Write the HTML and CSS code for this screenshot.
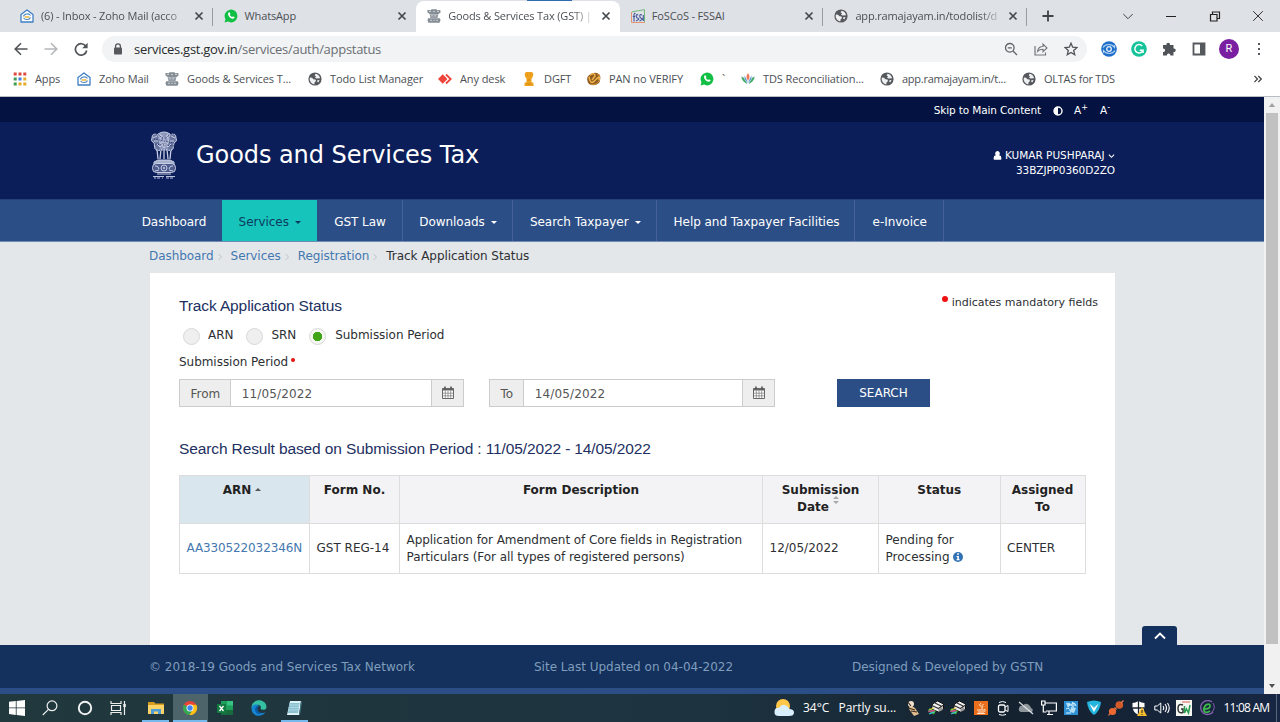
FILE: index.html
```html
<!DOCTYPE html>
<html lang="en">
<head>
<meta charset="utf-8">
<title>Goods &amp; Services Tax (GST)</title>
<link rel="stylesheet" href="styles.css">
</head>
<body>
<svg class="defs" width="0" height="0" aria-hidden="true">
  <symbol id="close" viewBox="0 0 12 12"><path d="M2.500 2.500l7 7M9.500 2.500l-7 7" stroke="#45494d" stroke-width="1.700" fill="none"/></symbol>
  <symbol id="zoho" viewBox="0 0 14 14"><path d="M1 5.500L7 1l6 4.500V13H1z" fill="#fff" stroke="#3f7fc4" stroke-width="1.300" stroke-linejoin="round"/><path d="M3.500 7.500C4 4.500 9 4 10.500 6.500M10.500 8.500C9.500 11 5 11 3.500 9" fill="none" stroke="#4b86c6" stroke-width="1.100"/><path d="M4.500 8h5" stroke="#efb73e" stroke-width="1.500"/></symbol>
  <symbol id="wa" viewBox="0 0 14 14"><path d="M.5 13.500l1-3.300A6.400 6.400 0 1 1 4 12.600z" fill="#12bf45"/><path d="M4.600 3.600c.8-.7 1.200-.1 1.700 1.100.2.500-.6.800-.4 1.200.5 1 1.200 1.700 2.200 2.100.4.200.8-.8 1.200-.6 1.400.7 1.600.9 1 1.700-.9 1.200-2.700.8-4.200-.4C4.200 7.200 3.300 5 4.600 3.600z" fill="#fff"/></symbol>
  <symbol id="globe" viewBox="0 0 14 14"><circle cx="7" cy="7" r="6.600" fill="#55585d"/><path d="M2 5.500l2 .2 1.500 1.600 2 .3.500 1.500-1.500 1.300-.2 2C3.500 12 1.700 9.500 1.600 7zM7.500 1.700L6.600 3.500l1.500.8L7 5.600l1.500 1 3.600-.3C11.800 4 10 2 7.500 1.700zM9.300 8.300l2.200-.3-1 2.200-1.200-.3z" fill="#eef0f2"/></symbol>
  <symbol id="pillar" viewBox="0 0 14 14"><path d="M4.500.3h5l.6.900 3.200-.2.300 2.600-2 1.500H2.600L.6 3.600.3 1l3.600.2z" fill="#858c94"/><path d="M2.600 5.300h8.800l-.8 3.700H3.400z" fill="#959ca4"/><path d="M1 9.200h12l.4 2-.8 2.500H1.400L.6 11.200z" fill="#848c95"/><path d="M2 2.600h2M6 2.600h2M10 2.600h2M4.200 6.800h1.500M7.500 6.800H9M3 11.300h2M6.200 11.300h1.600M9 11.300h2" stroke="#dfe2e6" stroke-width=".8"/></symbol>
  <symbol id="calendar" viewBox="0 0 12 13"><path d="M.5 2.500h11v10H.5z" fill="#fff" stroke="#666" /><path d="M.5 2.500h11v2H.5z" fill="#666"/><path d="M3 .5v3M9 .5v3" stroke="#555" stroke-width="1.600"/><path d="M3.300 4.500v8M6 4.500v8M8.700 4.500v8M.5 7.200h11M.5 9.800h11" stroke="#777" stroke-width=".7"/></symbol>
  <symbol id="printer" viewBox="0 0 16 16"><path d="M4.500 4l5-3 6 3v5l-5 3-7-3z" fill="#f1f1f1" stroke="#111" stroke-width="1"/><path d="M4 5.500l6.500 3 5-3.500M7 3l6 3" fill="none" stroke="#333" stroke-width="1.200"/><path d="M10.500 9v3l4-2V7z" fill="#999"/><path d="M1 8.500l7 2-2 4-6-3z" fill="#49b63d"/><path d="M.5 11.500l6-1" stroke="#d33b8c" stroke-width="1.600"/><path d="M1 14l5-2" stroke="#3ac5df" stroke-width="1.200"/><path d="M1.500 9.500l5-1.500" stroke="#e8d544" stroke-width="1"/></symbol>
</svg>

<header class="tabstrip">
  <div class="tabs">
    <div class="tab ruled"><svg class="fav"><use href="#zoho"/></svg><span class="tab-title fade">(6) - Inbox - Zoho Mail (acco</span><svg class="x"><use href="#close"/></svg></div>
    <div class="tab"><svg class="fav"><use href="#wa"/></svg><span class="tab-title">WhatsApp</span><svg class="x"><use href="#close"/></svg></div>
    <div class="tab active"><svg class="fav"><use href="#pillar"/></svg><span class="tab-title fade">Goods &amp; Services Tax (GST) |</span><svg class="x"><use href="#close"/></svg></div>
    <div class="tab ruled"><svg class="fav" viewBox="0 0 14 14"><path d="M.5 3v10.500H14" fill="none" stroke="#e59472"/><path d="M1 2.800L13.500.7V13" fill="none" stroke="#74b87b"/><path d="M3 12.500V6Q3 4 4.500 4.500M1.800 7.500h2.400M7.200 6Q5 5 5.200 7t2 2.500T5 12M11 6Q8.700 5 8.700 7t2 2.500-2.200 2.500M12.300 6v6" fill="none" stroke="#43559a" stroke-width="1.100"/></svg><span class="tab-title">FoSCoS - FSSAI</span><svg class="x"><use href="#close"/></svg></div>
    <div class="tab ruled"><svg class="fav"><use href="#globe"/></svg><span class="tab-title fade">app.ramajayam.in/todolist/d</span><svg class="x"><use href="#close"/></svg></div>
  </div>
  <svg class="plus" viewBox="0 0 12 12"><path d="M6 .5v11M.5 6h11" stroke="#404347" stroke-width="1.800"/></svg>
  <div class="window-controls">
    <svg viewBox="0 0 12 12"><path d="M1.300 4L6 8.700 10.700 4" fill="none" stroke="#444"/></svg>
    <svg viewBox="0 0 12 12"><path d="M1 6.500h10" stroke="#222"/></svg>
    <svg viewBox="0 0 12 12"><path d="M1.500 4.500h6.500v6.500H1.500zM3.500 4V2h7v6.500H8.500" fill="none" stroke="#222" stroke-width="1.200"/></svg>
    <svg viewBox="0 0 12 12"><path d="M1.200 1.200l9.600 9.600M10.800 1.200L1.200 10.800" stroke="#333"/></svg>
  </div>
</header>

<div class="toolbar">
  <div class="history">
    <svg viewBox="0 0 14 14"><path d="M13.500 7H1.500M7 1.200L1.200 7 7 12.800" fill="none" stroke="#505357" stroke-width="1.600"/></svg>
    <svg viewBox="0 0 14 14"><path d="M.5 7h12M7 1.200L12.800 7 7 12.800" fill="none" stroke="#b4b7ba" stroke-width="1.600"/></svg>
    <svg viewBox="0 0 14 14"><path d="M12 4.500A5.700 5.700 0 1 0 12.700 8.500" fill="none" stroke="#505357" stroke-width="1.700"/><path d="M13.600 .8V6.200H8.200z" fill="#505357"/></svg>
  </div>
  <div class="omnibox">
    <svg class="lock" viewBox="0 0 10 12"><path d="M2.600 5V3.300a2.400 2.400 0 0 1 4.800 0V5" fill="none" stroke="#55585c" stroke-width="1.300"/><rect x="1" y="4.500" width="8" height="7" rx="1" fill="#55585c"/></svg>
    <span class="url">services.gst.gov.in<i>/services/auth/appstatus</i></span>
    <div class="omni-actions">
      <svg viewBox="0 0 14 14"><circle cx="5.800" cy="5.800" r="4.300" fill="none" stroke="#606367" stroke-width="1.300"/><path d="M9 9l4 4M3.800 5.800h4" stroke="#606367" stroke-width="1.300"/></svg>
      <svg viewBox="0 0 14 14"><path d="M1 4v9h10.500v-2.500" fill="none" stroke="#74777a" stroke-width="1.200"/><path d="M3.500 9.500C4 6 6 4.500 9 4.500V2l4 4-4 3.700V7.200Q5.500 7.200 3.500 9.500z" fill="none" stroke="#74777a" stroke-width="1.100"/></svg>
      <svg viewBox="0 0 14 14"><path d="M7 1.200l1.700 4 4.300.4-3.300 2.800 1 4.300L7 10.400l-3.700 2.300 1-4.300L1 5.600l4.300-.4z" fill="none" stroke="#505357" stroke-width="1.300"/></svg>
    </div>
  </div>
  <div class="extensions">
    <svg viewBox="0 0 16 16"><circle cx="8" cy="8" r="7.800" fill="#1f6fc9"/><path d="M2 6.500C4.500 2.500 11 2.500 13.500 6.500l.3-2.500M14 9.500C11.500 13.500 5 13.500 2.500 9.500l-.3 2.500" fill="none" stroke="#b5d4f5" stroke-width="1.100"/><circle cx="8" cy="8" r="2.300" fill="none" stroke="#e8f2fd" stroke-width="1.300"/></svg>
    <svg viewBox="0 0 16 16"><circle cx="8" cy="8" r="7.800" fill="#15c39a"/><path d="M11.200 5A4.200 4.200 0 1 0 12 9.300H8.700M12 9v3" fill="none" stroke="#fff" stroke-width="1.500"/></svg>
    <svg viewBox="0 0 16 16"><path d="M2 4h3.500c-.7-3 4-3 3.500 0h3.500v3.500c3-.7 3 4 0 3.500v3.500H9.300c.5-2.800-3.800-2.800-3.300 0H2V11c2.700.5 2.700-3.800 0-3.500z" fill="#505458"/></svg>
    <svg viewBox="0 0 16 16"><path d="M2.500 2.500h11v11h-11z" fill="#fff" stroke="#55585c" stroke-width="1.800"/><path d="M9 2h5v12H9z" fill="#55585c"/></svg>
    <span class="avatar">R</span>
    <svg viewBox="0 0 16 16"><path d="M7 2h2v2H7zM7 7h2v2H7zM7 12h2v2H7z" fill="#55585c"/></svg>
  </div>
</div>

<nav class="bookmarks">
  <span><svg viewBox="0 0 14 14"><path d="M.7.500h3v3h-3zM5.500.500h3v3h-3zM10.300.500h3v3h-3z" fill="#dc4a41"/><path d="M.7 5.500h3v3h-3z" fill="#3d9a55"/><path d="M5.500 5.500h3v3h-3z" fill="#3e7de0"/><path d="M10.300 5.500h3v3h-3z" fill="#e5aa26"/><path d="M.7 10.500h3v3h-3z" fill="#3d9a55"/><path d="M5.500 10.500h3v3h-3zM10.300 10.500h3v3h-3z" fill="#e5aa26"/></svg>Apps</span>
  <span><svg><use href="#zoho"/></svg>Zoho Mail</span>
  <span><svg><use href="#pillar"/></svg>Goods &amp; Services T...</span>
  <span><svg><use href="#globe"/></svg>Todo List Manager</span>
  <span><svg viewBox="0 0 14 14"><path d="M0 7l4.700-4.700L9.400 7l-4.700 4.700z" fill="#ef443b"/><path d="M8 2.500L12.700 7l-4.700 4.500" fill="none" stroke="#ef443b" stroke-width="1.800"/></svg>Any desk</span>
  <span><svg viewBox="0 0 14 14"><path d="M4 0h6l1.500 2-1 3.500-1 1v3.500l2 1V14h-9v-3l2-1V6.500l-1-1L2.500 2z" fill="#efa21e"/><path d="M5 3h1M8 3h1M5.500 8h3M4.500 12h5" stroke="#cc8414" stroke-width=".8"/></svg>DGFT</span>
  <span><svg viewBox="0 0 14 14"><path d="M1 4l3-2q5-3 9 1 1 5-1 8-5 4-10 1Q-1 8 1 4z" fill="#8a5a20"/><path d="M2 4.500q1 8 5 5l4-4q2-2 1 3M3 3q5-3 5 1L5 8" fill="none" stroke="#efb24c" stroke-width="1.600"/><path d="M3.500 12q5 2 8.500-3M10 2l3 2" fill="none" stroke="#d99335"/></svg>PAN no VERIFY</span>
  <span><svg><use href="#wa"/></svg>`</span>
  <span><svg viewBox="0 0 14 14"><path d="M6.500 12Q1 10 .3 4.500 5 6 6.500 12z" fill="#41ab68"/><path d="M7.500 12Q13 10 13.700 4.500 9 6 7.500 12z" fill="#41ab68"/><path d="M7 12Q2.500 7 3 3.500 6.500 6 7 12zM7 12q4.500-5 4-8.500Q7.500 6 7 12z" fill="#4f8fce" stroke="#fff" stroke-width=".5"/><path d="M7 9Q3.500 4.500 7 1q3.500 3.500 0 8z" fill="#ec7653" stroke="#fff" stroke-width=".5"/></svg>TDS Reconciliation...</span>
  <span><svg><use href="#globe"/></svg><em>app.ramajayam.in/t...</em></span>
  <span><svg><use href="#globe"/></svg><em>OLTAS for TDS</em></span>
  <svg class="more" viewBox="0 0 8 8"><path d="M.5 1l3 3-3 3M4.300 1l3 3-3 3" fill="none" stroke="#444" stroke-width="1.200"/></svg>
</nav>

<div class="viewport">
  <main class="page">
    <div class="skip"><div class="wrap"><span class="skip-text">Skip to Main Content</span>
      <svg viewBox="0 0 10 10"><circle cx="5" cy="5" r="4" fill="none" stroke="#fff" stroke-width="1.400"/><path d="M5 1a4 4 0 0 0 0 8z" fill="#fff"/></svg>
      <span class="size">A<sup>+</sup></span><span class="size">A<sup>-</sup></span></div></div>
    <div class="brand"><div class="wrap">
      <svg class="emblem" viewBox="0 0 28 48"><g fill="none" stroke="#c8cde3" stroke-width="1">
        <path d="M8 3q6-4 12 0l-1 4q4 5 1 12H8Q5 12 9 7z" fill="#8d97bd"/>
        <path d="M8 4Q2 1 2 7q-2 3 2 5l1 6q2 3 5 1M20 4q6-3 6 3 2 3-2 5l-1 6q-2 3-5 1" fill="#68759f"/>
        <path d="M10 3q2 3 0 5t1 5q3 2 6 0t1-5-0-5M11 5h2m3 0h2M14 6v4M11 11h6M3 7l4-2M25 7l-4-2M4 10l4 0M24 10l-4 0M7 13l3 3 2-2 2 3 2-3 2 2 3-3"/>
        <path d="M7 18l1 10M11 18l-1 10M14 18v10M17 18l1 10M21 18l-1 10" stroke-width="1.300"/>
        <path d="M8 29h12l4 2v3H4v-3z" fill="#a7b0ce"/>
        <rect x="2.500" y="32.500" width="23" height="9" rx="4" fill="#4d5b8e"/>
        <circle cx="14" cy="37" r="3"/><circle cx="14" cy="37" r=".8"/><path d="M5 35q3-1 4 3M23 35q-3-1-4 3M5 40l4-1M23 40l-4-1M7 43h14"/></g>
        <path d="M1 2l8 2 3 3 4 0 3-3 8-2M3 13l22 2M4 8l20 4M5 19h18" fill="none" stroke="#0b1e59" stroke-width=".8" stroke-dasharray="1 1.500"/>
        <path d="M3 45.500h11m2 0h9M4 47h2m1 0h3m2 0h1m3 0h3m1 0h3" stroke="#bbc2dd" stroke-width="1.200"/></svg>
      <h1>Goods and Services Tax</h1>
      <div class="user"><span><svg viewBox="0 0 10 10"><path d="M5 0a2.500 2.800 0 0 1 1.900 4.700Q9.500 5 9.300 8.500q0 1.300-1.400 1.300H2.100Q.7 9.800.7 8.500.5 5 3.100 4.700A2.500 2.800 0 0 1 5 0z" fill="#fff"/></svg> KUMAR PUSHPARAJ <svg class="caret-v" viewBox="0 0 8 8"><path d="M1 2.500l3 3 3-3" fill="none" stroke="#fff" stroke-width="1.200"/></svg></span><span class="gstin">33BZJPP0360D2ZO</span></div>
    </div></div>
    <nav class="mainnav">
      <a class="first">Dashboard</a><a class="current">Services<b class="caret"></b></a><a>GST Law</a><a>Downloads<b class="caret"></b></a><a>Search Taxpayer<b class="caret"></b></a><a>Help and Taxpayer Facilities</a><a>e-Invoice</a>
    </nav>
    <div class="body-wrap">
      <div class="crumbs"><a>Dashboard</a><svg viewBox="0 0 4 8"><path d="M.5 1l3 3-3 3"/></svg><a>Services</a><svg viewBox="0 0 4 8"><path d="M.5 1l3 3-3 3"/></svg><a>Registration</a><svg viewBox="0 0 4 8"><path d="M.5 1l3 3-3 3"/></svg><span>Track Application Status</span></div>
      <section class="panel">
        <div class="panel-head"><h2>Track Application Status</h2><p class="mandatory"><b class="dot"></b>indicates mandatory fields</p></div>
        <div class="radios"><label><i class="radio"></i>ARN</label><label><i class="radio"></i>SRN</label><label><i class="radio on"></i>Submission Period</label></div>
        <p class="field-label">Submission Period<b class="dot small"></b></p>
        <div class="form-row">
          <div class="group from"><span class="addon">From</span><span class="value">11/05/2022</span><span class="cal"><svg><use href="#calendar"/></svg></span></div>
          <div class="group to"><span class="addon">To</span><span class="value">14/05/2022</span><span class="cal"><svg><use href="#calendar"/></svg></span></div>
          <button class="search">SEARCH</button>
        </div>
        <h2 class="result">Search Result based on Submission Period : 11/05/2022 - 14/05/2022</h2>
        <table>
          <colgroup><col class="c1"><col class="c2"><col class="c3"><col class="c4"><col class="c5"><col class="c6"></colgroup>
          <tr><th class="sorted">ARN<b class="up"></b></th><th>Form No.</th><th>Form Description</th><th>Submission<br><span class="date">Date<svg class="sort" viewBox="0 0 6 8"><path d="M3 0l3 3H0zM3 8l3-3H0z" fill="#aaa"/></svg></span></th><th>Status</th><th>Assigned<br>To</th></tr>
          <tr><td><a class="arn">AA330522032346N</a></td><td>GST REG-14</td><td class="desc">Application for Amendment of Core fields in Registration<br>Particulars (For all types of registered persons)</td><td>12/05/2022</td><td>Pending for<br>Processing <svg class="info" viewBox="0 0 10 10"><circle cx="5" cy="5" r="5" fill="#3273b5"/><path d="M4.200 1.300h1.700v1.500H4.200zM3.500 4h2.400v3.200h.8v1H3.500v-1h.8V5h-.8z" fill="#fff"/></svg></td><td>CENTER</td></tr>
        </table>
      </section>
    </div>
    <footer><span>© 2018-19 Goods and Services Tax Network</span><span>Site Last Updated on 04-04-2022</span><span class="credit">Designed &amp; Developed by GSTN</span>
      <div class="totop"><svg viewBox="0 0 12 8"><path d="M1 6.500l5-5 5 5" fill="none" stroke="#fff" stroke-width="1.900"/></svg></div></footer>
    <div class="foot-strip"></div>
  </main>
  <aside class="scrollbar"><svg viewBox="0 0 8 8"><path d="M4 2l3 4H1z" fill="#a0a0a0"/></svg><div class="thumb"></div><svg viewBox="0 0 8 8"><path d="M1 2h6L4 6z" fill="#505050"/></svg></aside>
</div>

<div class="taskbar">
  <div class="apps">
    <span><svg viewBox="0 0 16 16"><path d="M0 1.800l6.800-.8v6.500H0zM7.600.9L16 0v7.500H7.600zM0 8.300h6.800V15L0 14.100zM7.600 8.300H16V16l-8.400-.9z" fill="#fff"/></svg></span>
    <span class="pull"><svg viewBox="0 0 16 16"><circle cx="10" cy="5.800" r="4.900" fill="none" stroke="#eee" stroke-width="1.200"/><path d="M6.500 9.300L.8 15" stroke="#eee" stroke-width="1.200"/></svg></span>
    <span class="pull"><svg viewBox="0 0 16 16"><circle cx="8" cy="8" r="6.200" fill="none" stroke="#f3f3f3" stroke-width="1.900"/></svg></span>
    <span class="pull more-pull"><svg viewBox="0 0 16 16"><path d="M1 1v2.500h10V1M1 15v-2.500h10V15M1.500 5.500h9v5h-9zM14.500 1v14" fill="none" stroke="#eee" stroke-width="1.200"/><path d="M13.300 4h2.500v3h-2.500z" fill="#eee"/></svg></span>
    <span class="open"><svg viewBox="0 0 16 16"><path d="M0 2h6l1.500 1.500H16V14H0z" fill="#d69b1f"/><path d="M0 5h16v9H0z" fill="#fad467"/><path d="M3 14V9h10v5h-3v-2.500H6V14z" fill="#4e9fd8"/></svg></span>
    <span class="open focused"><svg viewBox="0 0 16 16"><circle cx="8" cy="8" r="7" fill="#e94335"/><path d="M1.900 4.500A7 7 0 0 0 7.500 15L11 9.500 8 8z" fill="#34a853"/><path d="M8 4.800h6.300A7 7 0 0 1 7.500 15l3.400-5.500z" fill="#fbc116"/><circle cx="8" cy="8" r="3.500" fill="#fff"/><circle cx="8" cy="8" r="2.700" fill="#4285f4"/></svg></span>
    <span><svg viewBox="0 0 16 16"><path d="M4 1h12v14H4z" fill="#1f9f5c"/><path d="M10 1h6v4.500h-6z" fill="#35c481"/><path d="M4 10h12v5H4z" fill="#176b3c"/><path d="M0 4h9v9H0z" fill="#107c41"/><path d="M2.500 6l4 5M6.500 6l-4 5" stroke="#fff" stroke-width="1.300"/></svg></span>
    <span><svg viewBox="0 0 16 16"><path d="M.5 8C0-2 15-2 15.500 7c0 3-4 3.500-6 2 1.500-3-1.500-5-4-4S.5 7 .5 8z" fill="#35bfa2"/><path d="M.5 8C1 4 6 3.500 8 6c-3 1-3 6 2 7 2 .3 3.500-.3 4.500-1C11 18 0 17 .5 8z" fill="#1686d3"/><path d="M4 9c0-2 1.500-3.500 4-3-3 2-1 7 2.500 7-2 2-6.500 1-6.500-4z" fill="#0b5aa5"/></svg></span>
    <span class="open"><svg viewBox="0 0 16 16"><path d="M4 1h11l-2 14H1z" fill="#def1f5"/><path d="M3.500 3h10l-1.500 10H2z" fill="#8bc2d2"/><path d="M4 5h9M3.500 7.500h9M3 10h9" stroke="#b9dde6" stroke-width=".8"/><path d="M15 1l1 1-2 13h-1z" fill="#3d7181"/></svg></span>
  </div>
  <div class="weather"><svg viewBox="0 0 20 20"><circle cx="9" cy="8" r="7" fill="#ffc64a"/><path d="M5 18Q0 18 .5 13.500T5 10Q8 5 12 7.500T15 11q5 0 5 3.500T15 18z" fill="#d9effd"/></svg><span class="temp">34°C</span><span>Partly su...</span></div>
  <div class="tray">
    <svg viewBox="0 0 16 16"><path d="M5 5l5 3 4 6-5 2-5-7z" fill="#e2bd8e"/><circle cx="6" cy="4" r="3" fill="#f0e1cd"/><path d="M2 1l4 5M3 8l7 2M6 11l6 1" stroke="#3b2b22" stroke-width="1.200"/></svg>
    <svg><use href="#printer"/></svg>
    <svg><use href="#printer"/></svg>
    <svg viewBox="0 0 16 16"><path d="M1 1h14v14H1z" fill="#ec6f1e"/><path d="M8 3q-3 2 0 3.500T8 9.500M10.500 4Q8 5.500 10 7M4 10h7M5 12h6M11 9.500q3 0 0 2.200M4 13.500h8" fill="none" stroke="#ffe4ca" stroke-width="1"/></svg>
    <svg viewBox="0 0 16 16"><rect x="3.500" y="5" width="6.500" height="7" rx="1.500" fill="none" stroke="#fff" stroke-width="1.300"/><path d="M10 7l3-1.500v6L10 10M4 2.500Q7.500.5 11 2.500M4 14.500q3.500 1.500 7 0" fill="none" stroke="#fff"/></svg>
    <svg viewBox="0 0 16 16"><path d="M3 12q-3-1-2-4t4-2q2-4 6-1 2 2 2 3 3 1 1 4z" fill="#8e969c"/><path d="M1 2l14 12" stroke="#dce0e3" stroke-width="1.200"/></svg>
    <svg viewBox="0 0 16 16"><path d="M4 3h11.400v8H5M8 11v3.500M6 14.500h6M.6 1h3.400v4H.6zM2.300 5v7h3" fill="none" stroke="#fff" stroke-width="1.200"/></svg>
    <svg viewBox="0 0 16 16"><path d="M1 1h14v14H1z" fill="#2f91d4"/><path d="M3 3q3-1 5 1L5 8zM8 7l5 1-2 5-4-1z" fill="#b2ddf4"/><path d="M9 3q4 0 4 3M3 9q4-2 4 2M3 13h5M10 2q-3 5 1 5M5 5h7" stroke="#d8f1ff" fill="none"/></svg>
    <svg viewBox="0 0 16 16"><path d="M1 2q7-3 14 0-1 9-7 13Q2 11 1 2z" fill="#24b5de"/><path d="M3.500 4l4.500 3 4.500-3L8 12z" fill="#fff"/><path d="M5 5l3 2 3-2-3 3z" fill="#48a9c8"/></svg>
    <svg viewBox="0 0 16 16"><circle cx="4.500" cy="11.500" r="3.600" fill="#eb6930"/><circle cx="11.300" cy="5" r="3.800" fill="#d35b2a"/><path d="M13 3l2.500-2.500M6.500 7.500l2 2M2 13.500l-1.500 2" stroke="#ed7d47" stroke-width="1.200"/></svg>
    <svg viewBox="0 0 16 16"><path d="M7.500 1q3 2 6 2 1 9-6 12Q.5 12 1.500 3q3 0 6-2z" fill="#fff"/><path d="M7.500 1v14M1.500 8h12" stroke="#18232e" stroke-width="1.300"/><path d="M11 7l5 9H6z" fill="#f5bd2e"/><path d="M11 10v3M11 14v1" stroke="#222"/></svg>
    <svg viewBox="0 0 16 16"><path d="M.8 6h2.500l3.500-3v10l-3.500-3H.8z" fill="none" stroke="#fff"/><path d="M9 6q1.500 2 0 4M11 4q3 4 0 8M13.500 3q3.500 5 0 10" fill="none" stroke="#fff" stroke-width="1.100"/></svg>
    <svg viewBox="0 0 16 16"><path d="M0 0h16v16H0z" fill="#f5f5f2"/><path d="M7 5Q2 3 2 8.500t5 4V9H5" fill="none" stroke="#333" stroke-width="1.500"/><path d="M8.500 6v7l2-4 2 4 1.500-8" fill="none" stroke="#299b4d" stroke-width="1.500"/><path d="M6 2h8" stroke="#e15b50"/></svg>
    <svg viewBox="0 0 16 16"><path d="M13 2A7 7 0 1 0 14 12" fill="none" stroke="#8561ad" stroke-width="1.300"/><path d="M14 3q3 5-1 9" fill="none" stroke="#8561ad"/><path d="M5 9q6 0 6-3T7 5q-4 4-1 7 2 1 5-1" fill="none" stroke="#3fb74d" stroke-width="1.800"/></svg>
  </div>
  <span class="clock">11:08 AM</span>
</div>
</body>
</html>
```
FILE: styles.css
```css
* { box-sizing: border-box; }
html, body { margin: 0; height: 722px; overflow: hidden; }
body { width: 1280px; display: flex; flex-direction: column; font: 12px/17px "DejaVu Sans", sans-serif; color: #2d2f33; background: #fff; }
svg { flex: none; display: block; }
p, h1, h2 { margin: 0; font-weight: normal; }
.defs { position: absolute; }

/* browser chrome */
.tabstrip { height: 32px; flex: none; display: flex; align-items: center; background: linear-gradient(#2f6cab, #2f6cab) 527px 0 / 45px 1px no-repeat #dee1e6; padding-left: 9px; font: 11px/14px "Open Sans", sans-serif; color: #4c5055; }
.tabs { display: grid; grid-template-columns: repeat(5, 203.600px); height: 32px; }
.tab { display: flex; align-items: center; gap: 7px; padding: 0 8px 0 11px; min-width: 0; }
.ruled { background: linear-gradient(#999da2, #999da2) right 8px / 1px 18px no-repeat; }
.tab.active { background: #fff; border-radius: 8px 8px 0 0; margin-top: 1px; padding-bottom: 1px; }
.fav { width: 14px; height: 14px; }
.x { width: 12px; height: 12px; }
.tab-title { flex: 1; white-space: nowrap; letter-spacing: -.15px; }
.fade { -webkit-mask-image: linear-gradient(90deg, #000 86%, rgba(0,0,0,.15)); mask-image: linear-gradient(90deg, #000 86%, rgba(0,0,0,.15)); }
.plus { width: 12px; height: 12px; margin-left: 15px; }
.window-controls { margin-left: auto; display: flex; gap: 31.400px; padding-right: 16px; height: 27px; align-items: center; }
.window-controls svg { width: 12px; height: 12px; }
.toolbar { height: 34px; flex: none; display: flex; align-items: center; padding-left: 13px; }
.history { display: flex; gap: 16px; width: 89px; padding-left: 1px; }
.history svg { width: 14px; height: 14px; }
.omnibox { width: 985px; height: 26px; border-radius: 13px; background: #f1f3f4; display: flex; align-items: center; padding: 0 9px 0 11px; }
.lock { width: 10px; height: 12px; margin-right: 11px; }
.url { font: 13px/18px "Open Sans", sans-serif; letter-spacing: -.29px; color: #2a2c2f; white-space: nowrap; }
.url i { font-style: normal; color: #6b6e73; }
.omni-actions { margin-left: auto; display: flex; gap: 16px; }
.omni-actions svg { width: 14px; height: 14px; }
.extensions { display: flex; align-items: center; gap: 14px; margin-left: 14px; }
.extensions svg { width: 16px; height: 16px; }
.avatar { width: 20px; height: 20px; border-radius: 50%; background: #7a1fa2; color: #fff; font: 11px/20px Roboto, sans-serif; text-align: center; margin: 0 -2px; }
.bookmarks { height: 31px; flex: none; border-bottom: 1px solid #b9bdc4; display: grid; grid-template-columns: 64px 88px 143px 130px 84px 65px 113px 41px 139px 142px 232px 8px; padding-left: 13px; align-items: center; font: 11px/14px "Open Sans", sans-serif; letter-spacing: -.1px; color: #4c5055; padding-bottom: 4px; }
.bookmarks span { display: flex; gap: 8px; align-items: center; white-space: nowrap; }
.bookmarks em { font-style: normal; letter-spacing: -.25px; }
.bookmarks svg { width: 14px; height: 14px; }
.bookmarks .more { width: 8px; height: 8px; }

/* page */
.viewport { display: flex; height: 597px; flex: none; }
.page { width: 1264px; display: flex; flex-direction: column; background: #e4e7ea; }
.wrap { width: 966px; margin: 0 auto 0 149px; display: flex; align-items: center; }
.skip { height: 25px; background: #031240; color: #fff; display: flex; font-size: 10.500px; }
.skip .wrap { justify-content: flex-end; padding: 2px 4px 0 0; }
.skip-text { letter-spacing: -.12px; }
.skip svg { width: 10px; height: 10px; margin: 0 11px 0 12px; }
.skip .size { width: 14px; margin-right: 12px; }
.skip .size + .size { margin-right: 0; width: 11px; }
.skip sup { font-size: 8px; line-height: 0; }
.brand { height: 77px; background: #0b1e59; display: flex; color: #fff; }
.emblem { width: 28px; height: 48px; margin: -12px 18px 0 1px; }
.brand h1 { font-size: 24px; line-height: 30px; margin-top: -11px; white-space: nowrap; letter-spacing: -.06px; }
.user { margin-left: auto; margin-top: 4px; font-size: 10.500px; line-height: 15px; text-align: right; white-space: nowrap; }
.user span { display: block; }
.user .gstin { letter-spacing: -.1px; }
.user svg { display: inline-block; width: 9px; height: 9px; vertical-align: -1px; }
.user .caret-v { width: 7px; height: 8px; }
.mainnav { height: 43px; display: grid; grid-template-columns: 98px 94.500px 86px 110px 144.500px 198px 88.500px; padding-left: 124px; background: #2c4e86; border-top: 1px solid #23427a; border-bottom: 1px solid #6f8ab4; color: #fff; }
.mainnav a { display: flex; align-items: center; justify-content: center; border-right: 1px solid #446297; white-space: nowrap; color: #fff; padding: 3px 0 0 2px; letter-spacing: -.04px; }
.mainnav a.current { background: #17c4bb; color: #0e3a61; border-right-color: #17c4bb; }
.mainnav .first { border-right: 0; }
.caret { border: 3px solid transparent; border-top-color: currentColor; border-bottom: 0; margin-left: 6px; }
.body-wrap { width: 965px; margin-left: 150px; flex: 1; display: flex; flex-direction: column; }
.crumbs { height: 31px; display: flex; align-items: center; white-space: nowrap; margin-left: -1px; padding-bottom: 2px; letter-spacing: -.06px; }
.crumbs svg { width: 4px; height: 8px; margin: 0 9px 0 4px; fill: none; stroke: #bcc4cc; }
a { color: #4478b0; }
.panel { flex: 1; background: #fff; padding: 20px 17px 0 29px; }
.panel-head { display: flex; justify-content: space-between; height: 33px; }
h2 { font: 15.500px/26px "Liberation Sans", sans-serif; color: #1d2f61; white-space: nowrap; letter-spacing: -.12px; }
.mandatory { display: flex; align-items: center; height: 18px; font-size: 11px; }
.dot { width: 6px; height: 6px; border-radius: 50%; background: #ee1111; margin: -6px 4px 0 0; }
.radios { display: flex; height: 19px; margin-left: 4px; }
.radios label { display: flex; line-height: 19px; }
.radio { width: 17px; height: 17px; border-radius: 50%; border: 1px solid #d8d8d8; background: #efefef; margin: 2px 8px 0 0; }
.radios label + label { margin-left: 13px; }
.radio.on { background: radial-gradient(circle, #3fa516 4.400px, #f3f7f0 5px); margin-right: 9px; }
.radios, .field-label { letter-spacing: -.04px; }
.field-label { display: flex; height: 17px; margin-top: 8px; line-height: 19px; }
.dot.small { width: 4px; height: 4px; margin: 5px 0 0 3px; }
.form-row { display: flex; height: 28px; margin-top: 9px; }
.group { display: flex; border: 1px solid #ccc; color: #555; line-height: 28px; }
.group.from { width: 285px; margin-right: 25px; }
.group.to { width: 286px; margin-right: 62px; }
.addon { background: #eee; border-right: 1px solid #ccc; padding: 0 10px 0 10.500px; }
.value { flex: 1; padding-left: 10.500px; letter-spacing: .15px; }
.cal { width: 32px; background: #eee; border-left: 1px solid #ccc; display: grid; place-items: center; }
.cal svg { width: 12px; height: 13px; margin-top: -1px; }
.search { width: 93px; border: 0; padding: 0; background: #2c4e86; color: #fff; font: 12px/28px "DejaVu Sans", sans-serif; }
h2.result { margin-top: 29px; height: 38px; }
table { width: 906px; table-layout: fixed; border-collapse: collapse; margin-top: 1px; }
.c1 { width: 130px; } .c2 { width: 90px; } .c3 { width: 363px; } .c4 { width: 116px; } .c5 { width: 121.500px; } .c6 { width: 85px; }
th, td { border: 1px solid #ddd; padding: 0 7px; height: 49px; white-space: nowrap; }
th { background: #f3f3f6; vertical-align: top; padding: 6px 0 0; color: #222; height: 48px; }
th.sorted { background: #dae6ee; padding-right: 5px; }
td { text-align: left; padding-left: 6.500px; height: 50px; }
.arn { letter-spacing: -.12px; }
.desc { letter-spacing: -.06px; }
.up { display: inline-block; border: 3px solid transparent; border-bottom-color: #555; border-top: 0; margin-left: 4px; vertical-align: 3px; }
.date { position: relative; padding-right: 15px; }
.sort { position: absolute; width: 6px; height: 8px; right: 5px; top: -4px; }
.info { display: inline-block; width: 10px; height: 10px; vertical-align: -1px; }
footer { position: relative; height: 43px; background: #14315d; color: #7f9dbc; display: grid; grid-template-columns: 385px 318px auto; padding: 2px 0 0 149px; align-items: center; }
.credit { letter-spacing: -.08px; }
.totop { position: absolute; left: 1142px; top: -19px; width: 35px; height: 19px; background: #14315d; border-radius: 3px 3px 0 0; display: grid; place-items: center; }
.totop svg { width: 12px; height: 8px; }
.foot-strip { height: 6px; background: #2c4e86; }
.scrollbar { width: 16px; background: #f1f1f1; display: flex; flex-direction: column; align-items: center; }
.scrollbar svg { width: 8px; height: 8px; margin: 4px 0; }
.thumb { width: 12px; height: 531px; background: #c1c1c1; margin-bottom: auto; }

/* taskbar */
.taskbar { height: 28px; flex: none; display: flex; background: linear-gradient(90deg, #21383d, #1d3340 55%, #14212f 80%, #172743); color: #fff; font: 12px/28px "Open Sans", sans-serif; box-shadow: inset -3px 0 #172743, inset -4px 0 #58677a; }
.apps { display: grid; grid-template-columns: repeat(9, 34.600px); width: 774px; }
.apps span { display: grid; place-items: center; }
.apps .pull { padding-right: 3px; }
.apps .more-pull { padding-right: 6px; }
.apps svg { width: 16px; height: 16px; }
.apps .open { background: linear-gradient(#76b9ed, #76b9ed) center bottom / 27px 2px no-repeat; }
.apps .focused { background: linear-gradient(#76b9ed, #76b9ed) center bottom / 34px 2px no-repeat #4d646b; }
.weather { display: flex; align-items: center; width: 131px; white-space: nowrap; }
.weather svg { width: 20px; height: 20px; margin-right: 9px; }
.temp { margin-right: 9px; }
.tray { display: grid; grid-template-columns: repeat(14, 22.600px); align-items: center; width: 318.500px; }
.tray svg { width: 16px; height: 16px; }
.clock { white-space: nowrap; letter-spacing: -.8px; }
```
